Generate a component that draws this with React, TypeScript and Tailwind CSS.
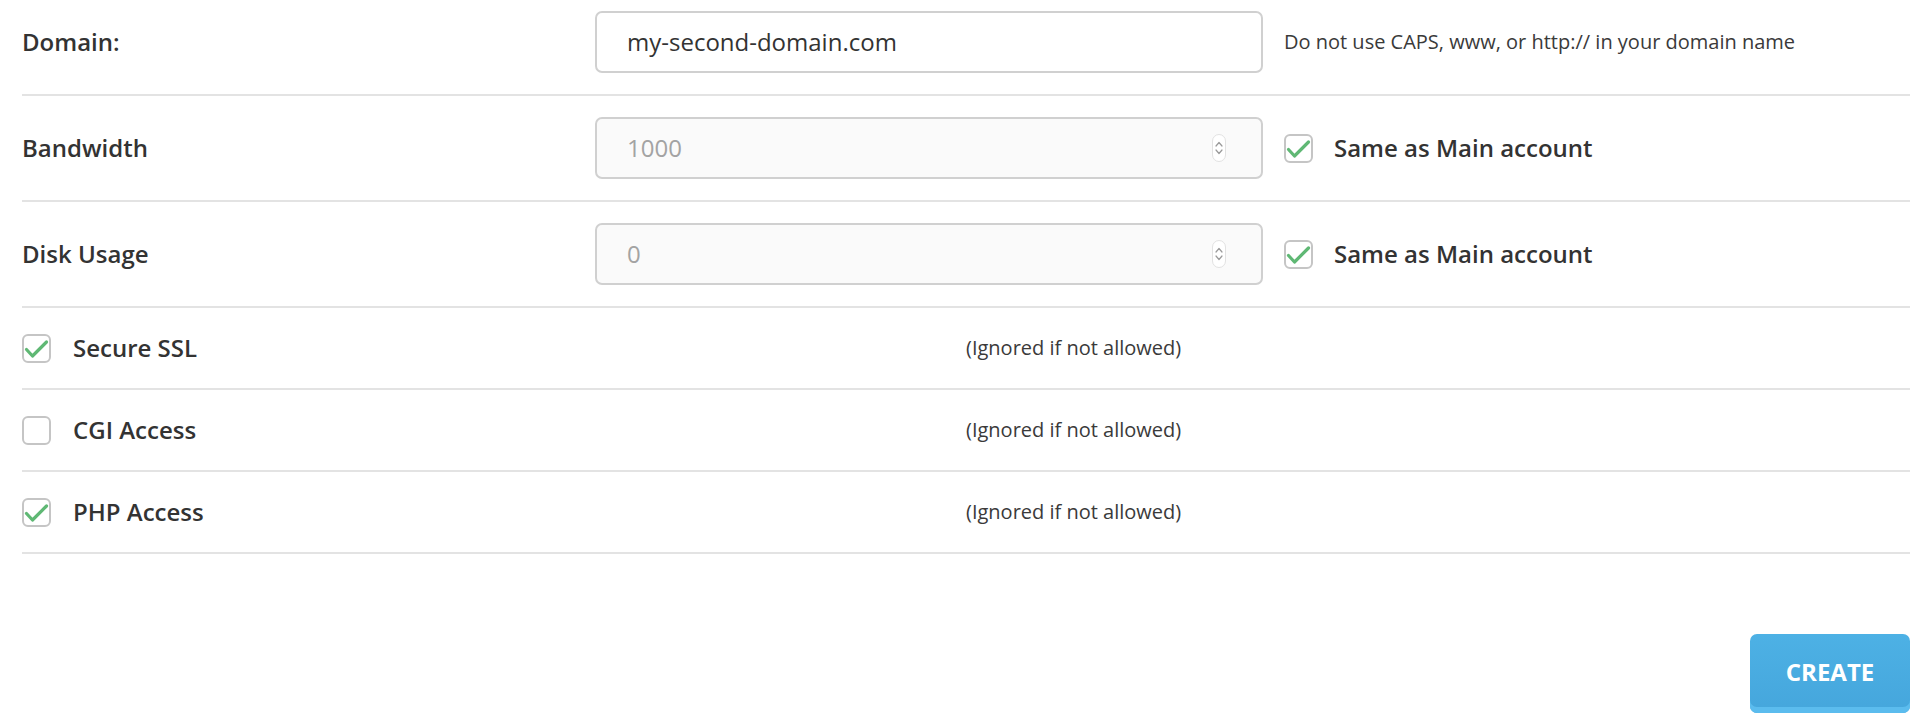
import React from "react";

function Check({ checked }: { checked: boolean }) {
  return (
    <div className="relative w-[29px] h-[29px] shrink-0 rounded-[6px] border-2 border-[#c5c5c5] bg-white">
      {checked && (
        <svg className="absolute -left-[2px] -top-[2px]" width="29" height="29" viewBox="0 0 29 29" fill="none">
          <polyline
            points="4.5,15.5 10.5,22 24.5,8"
            stroke="#5fb874"
            strokeWidth="3.2"
            strokeLinecap="round"
            strokeLinejoin="round"
          />
        </svg>
      )}
    </div>
  );
}

function Spinner() {
  return (
    <div className="w-[14px] h-[28px] rounded-full border border-[#e2e2e2] bg-white flex flex-col items-center justify-center gap-[2px]">
      <svg width="8" height="6" viewBox="0 0 8 6" fill="none">
        <polyline points="1,5 4,1.5 7,5" stroke="#9a9a9a" strokeWidth="1.2" strokeLinecap="round" strokeLinejoin="round" />
      </svg>
      <svg width="8" height="6" viewBox="0 0 8 6" fill="none">
        <polyline points="1,1 4,4.5 7,1" stroke="#9a9a9a" strokeWidth="1.2" strokeLinecap="round" strokeLinejoin="round" />
      </svg>
    </div>
  );
}

function NumberRow({ label, value }: { label: string; value: string }) {
  return (
    <div className="flex items-center py-[21px] border-b-2 border-[#e3e3e3]">
      <div className="w-[573px] shrink-0 text-[24px] font-semibold">{label}</div>
      <div className="w-[668px] h-[62px] shrink-0 rounded-[7px] border-2 border-[#d0d0d0] bg-[#fafafa] flex items-center justify-between pl-[30px] pr-[35px]">
        <span className="text-[24px] text-[#a3a3a3]">{value}</span>
        <Spinner />
      </div>
      <div className="ml-[21px] flex items-center">
        <Check checked={true} />
        <span className="ml-[21px] text-[24px] font-semibold">Same as Main account</span>
      </div>
    </div>
  );
}

function CheckRow({ label, checked }: { label: string; checked: boolean }) {
  return (
    <div className="flex items-center h-[82px] border-b-2 border-[#e3e3e3]">
      <div className="w-[944px] shrink-0 flex items-center">
        <Check checked={checked} />
        <span className="ml-[22px] text-[24px] font-semibold">{label}</span>
      </div>
      <span className="text-[20px] text-[#3a3a3a]">(Ignored if not allowed)</span>
    </div>
  );
}

export default function App() {
  return (
    <div className="bg-white w-[1930px] h-[726px] pl-[22px] pr-[20px] font-['Open_Sans',sans-serif] text-[#333]">
      <div className="flex items-center pt-[11px] pb-[21px] border-b-2 border-[#e3e3e3]">
        <div className="w-[573px] shrink-0 text-[24px] font-semibold">Domain:</div>
        <div className="w-[668px] h-[62px] shrink-0 rounded-[7px] border-2 border-[#d0d0d0] bg-white flex items-center pl-[30px]">
          <span className="text-[24px] text-[#333]">my-second-domain.com</span>
        </div>
        <div className="ml-[21px] text-[20px] text-[#3a3a3a]">Do not use CAPS, www, or http:// in your domain name</div>
      </div>
      <NumberRow label="Bandwidth" value="1000" />
      <NumberRow label="Disk Usage" value="0" />
      <CheckRow label="Secure SSL" checked={true} />
      <CheckRow label="CGI Access" checked={false} />
      <CheckRow label="PHP Access" checked={true} />
      <div className="flex justify-end pt-[80px]">
        <button className="w-[160px] h-[79px] rounded-[7px] bg-gradient-to-b from-[#4db1e5] to-[#45a6dc] shadow-[inset_0_-6px_0_#5bbcee] text-white text-[24px] font-bold pb-[4px]">
          CREATE
        </button>
      </div>
    </div>
  );
}
